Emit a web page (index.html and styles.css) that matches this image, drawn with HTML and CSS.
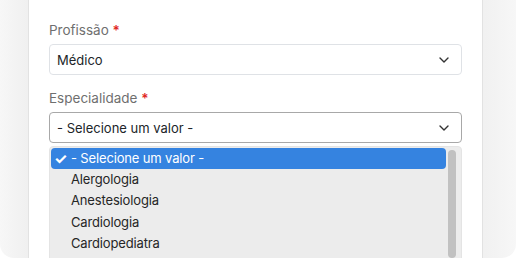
FILE: index.html
```html
<!DOCTYPE html>
<html lang="pt-BR">
<head>
  <meta charset="UTF-8" />
  <meta name="viewport" content="width=device-width, initial-scale=1.0" />
  <title>Cadastro</title>
  <link rel="stylesheet" href="styles.css">
</head>
<body>
  <div class="frame">
    <div class="card">
      <div class="field">
        <label>Profissão <span class="req">*</span></label>
        <div class="select">
          <span>Médico</span>
          <svg class="chev" width="10" height="6" viewBox="0 0 10 6"><path d="M1 1l4 4 4-4" fill="none" stroke="#333" stroke-width="1.4" stroke-linecap="round" stroke-linejoin="round"/></svg>
        </div>
      </div>

      <div class="field">
        <label>Especialidade <span class="req">*</span></label>
        <div class="select open">
          <span>- Selecione um valor -</span>
          <svg class="chev" width="10" height="6" viewBox="0 0 10 6"><path d="M1 1l4 4 4-4" fill="none" stroke="#333" stroke-width="1.4" stroke-linecap="round" stroke-linejoin="round"/></svg>
        </div>
        <div class="dropdown">
          <ul class="options">
            <li class="active"><span class="check">✓</span>- Selecione um valor -</li>
            <li>Alergologia</li>
            <li>Anestesiologia</li>
            <li>Cardiologia</li>
            <li>Cardiopediatra</li>
          </ul>
          <div class="scrollbar"><div class="thumb"></div></div>
        </div>
      </div>
    </div>
  </div>
</body>
</html>
```

FILE: styles.css
```css
* {
  margin: 0;
  padding: 0;
  box-sizing: border-box;
}
html, body {
  height: 100%;
  overflow: hidden;
}
body {
  font-family: Inter, 'Noto Sans', sans-serif;
  background: #fff;
  color: #212529;
}
.frame {
  height: 258px;
  background: linear-gradient(to right, #f7f7f7, #efefef 6%, #f1f1f1 94%, #f7f7f7);
  border-radius: 0 0 14px 14px;
  padding: 0 33px 0 28px;
  overflow: hidden;
}
.card {
  height: 100%;
  background: #fff;
  border-left: 1px solid #e2e2e2;
  border-right: 1px solid #e2e2e2;
  padding: 21px 20px 0 20px;
}
.field {
  margin-bottom: 14px;
}
.field label {
  display: block;
  font-size: 13.5px;
  line-height: 18px;
  color: #6f6f6f;
  margin-bottom: 5px;
}
.req {
  color: #e0241b;
  font-weight: 600;
}
.select {
  height: 31px;
  border: 1px solid #dfe2e6;
  border-radius: 4px;
  background: #fff;
  display: flex;
  align-items: center;
  justify-content: space-between;
  padding: 0 12px 0 7px;
  font-size: 13px;
  color: #212529;
}
.select.open {
  border-color: #a8a8a8;
}
.chev {
  display: block;
}
.dropdown {
  margin-top: 3px;
  height: 120px;
  background: #ececec;
  border: 1px solid #e4e4e4;
  border-radius: 4px 4px 0 0;
  display: flex;
  padding: 1px 2px 0 1px;
}
.options {
  list-style: none;
  flex: 1;
}
.options li {
  height: 21.2px;
  line-height: 21px;
  font-size: 13px;
  letter-spacing: -0.15px;
  color: #262626;
  padding-left: 20px;
  position: relative;
}
.options li.active {
  background: #3583e0;
  color: #fff;
  border-radius: 4px;
}
.check {
  position: absolute;
  left: 3px;
  top: 0;
  font-size: 15px;
  font-weight: 700;
}
.scrollbar {
  width: 13px;
  padding: 2px 3px 0 2px;
}
.thumb {
  width: 8px;
  height: 108px;
  background: #c1c1c1;
  border-radius: 4px;
}
```
